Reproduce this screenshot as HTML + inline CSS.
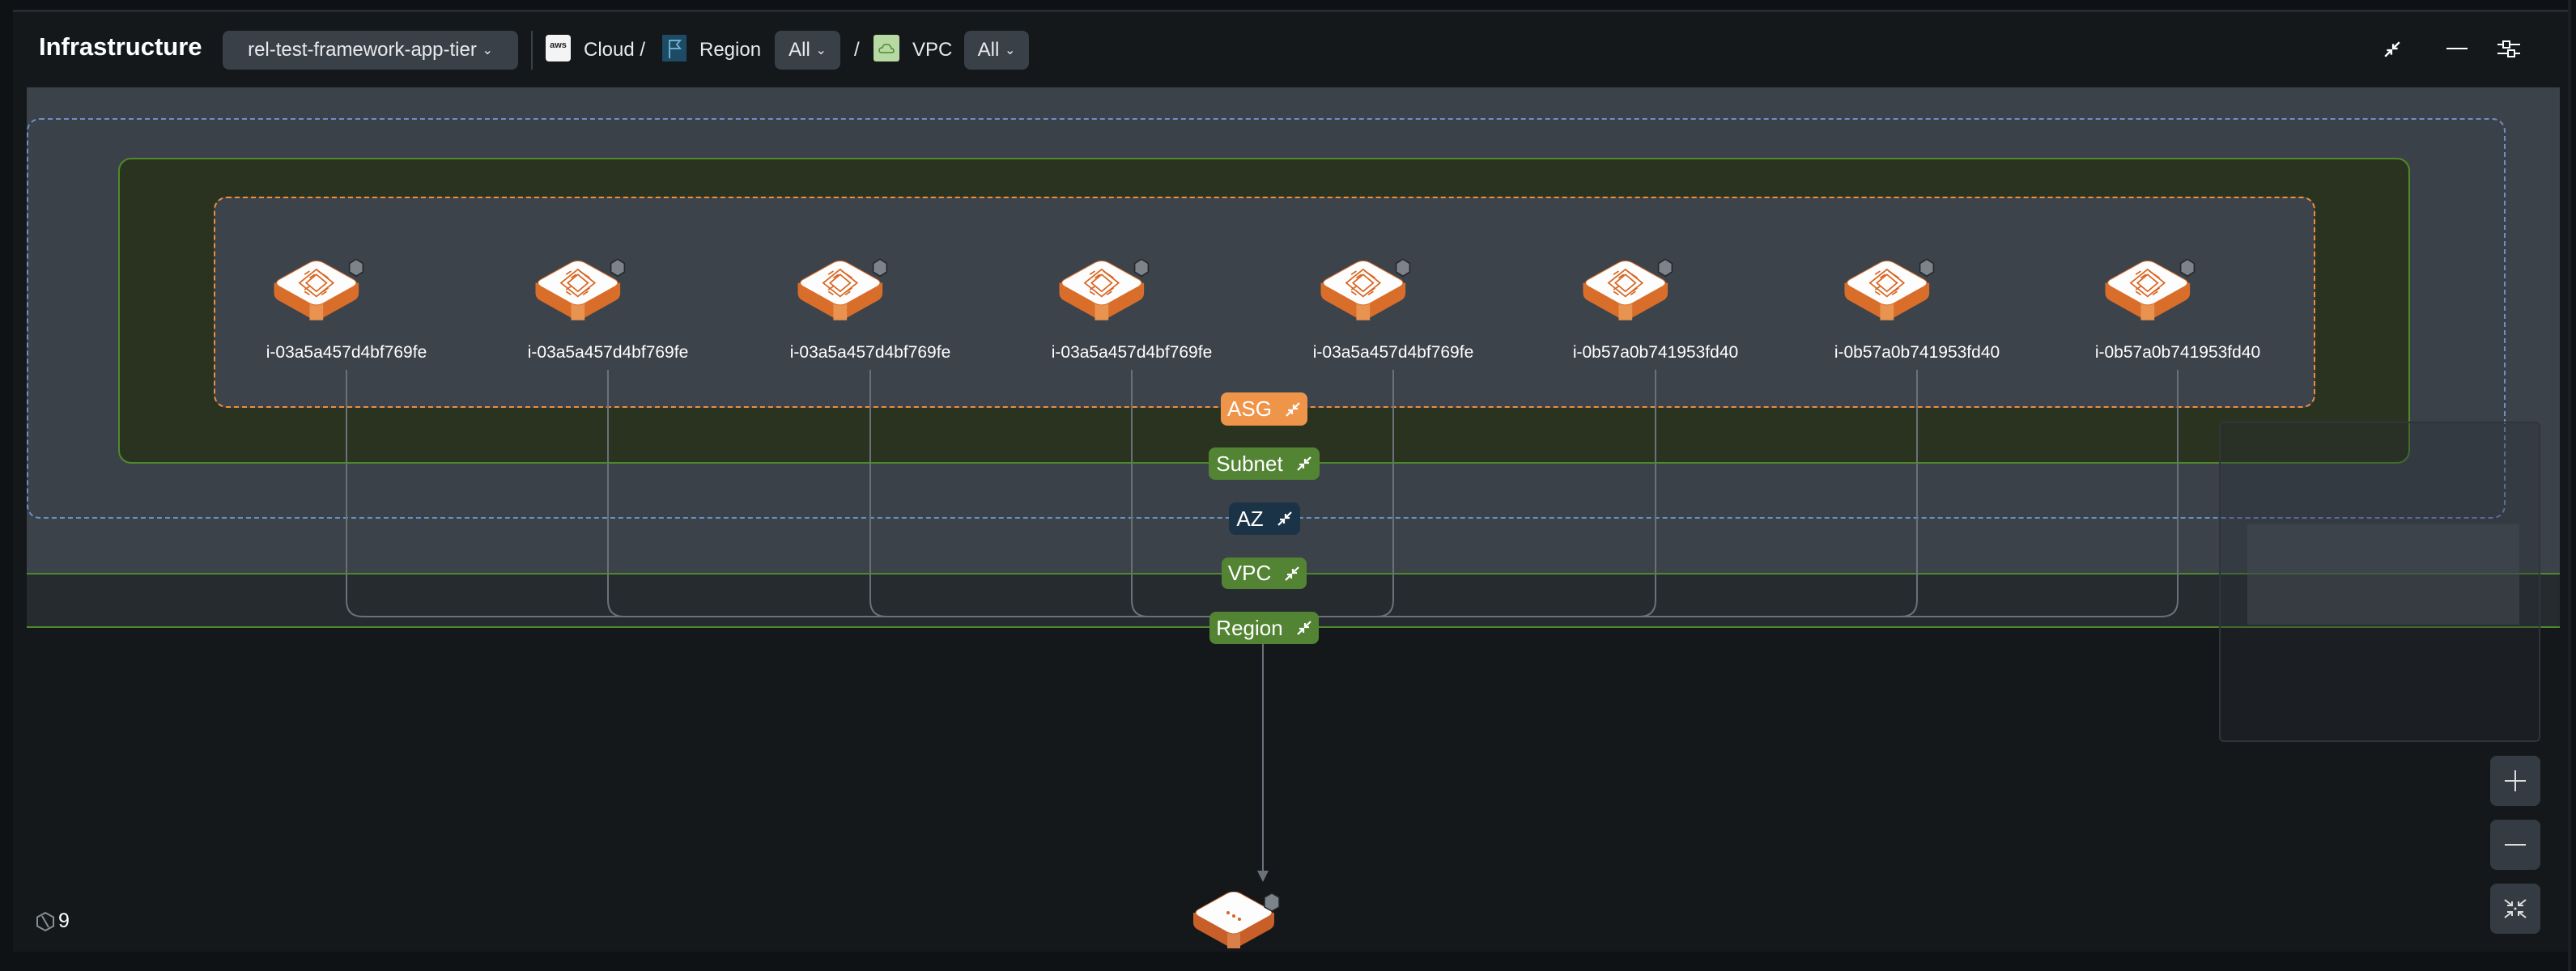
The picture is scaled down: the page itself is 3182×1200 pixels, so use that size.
<!DOCTYPE html>
<html><head><meta charset="utf-8"><style>
*{margin:0;padding:0;box-sizing:border-box}
body{width:3182px;height:1200px;background:#0f1214;position:relative;overflow:hidden;font-family:"Liberation Sans",sans-serif;color:#fff}
.abs{position:absolute}
.panel{left:16px;top:12px;width:3160px;height:1164px;background:#14181b;border-top:3px solid #252b30}
.dd{background:#3a4048;border-radius:8px;font-size:24px;color:#e8eaed;display:flex;align-items:center;justify-content:center}
.badge{border-radius:8px;font-size:26px;display:flex;align-items:center;justify-content:center;gap:16px;color:#fff}
.lbl{font-size:21px;color:#fff;width:260px;text-align:center}
.btn{background:#353b43;border-radius:8px}
</style></head><body>
<div class="abs panel"></div>
<div class="abs" style="left:3172px;top:0;width:4px;height:1200px;background:#1c2024"></div>
<svg width="0" height="0" style="position:absolute"><defs>
<g id="col" stroke="#fff" stroke-width="2.2" fill="none"><path d="M2 18L9 11M4 11H9V16M18 2L11 9M16 9H11V4"/></g>
</defs></svg>
<!-- header -->
<div class="abs" style="left:48px;top:34px;font-size:31px;font-weight:bold;line-height:48px">Infrastructure</div>
<div class="abs dd" style="left:275px;top:38px;width:365px;height:48px">rel-test-framework-app-tier&nbsp;<span style="font-size:16px">⌄</span></div>
<div class="abs" style="left:656px;top:38px;width:2px;height:48px;background:#3a4048"></div>
<div class="abs" style="left:674px;top:43px;width:31px;height:33px;background:#f4f4f4;border-radius:4px;color:#222;font-size:11px;font-weight:bold;text-align:center;line-height:26px">aws</div>
<div class="abs" style="left:721px;top:48px;font-size:24px;color:#e8eaed">Cloud /</div>
<div class="abs" style="left:818px;top:43px;width:30px;height:33px;background:#1d4b63"><svg width="30" height="33"><path d="M9 6V29M9 7H22L18 12L22 17H9" stroke="#6aaed0" stroke-width="2" fill="none"/></svg></div>
<div class="abs" style="left:864px;top:48px;font-size:24px;color:#e8eaed">Region</div>
<div class="abs dd" style="left:957px;top:38px;width:81px;height:48px">All&nbsp;<span style="font-size:16px">⌄</span></div>
<div class="abs" style="left:1055px;top:48px;font-size:24px;color:#e8eaed">/</div>
<div class="abs" style="left:1079px;top:43px;width:32px;height:33px;background:#b7d9a2;border-radius:3px"><svg width="32" height="33"><path d="M10 22Q7 22 7 19Q7 16 11 16Q12 11 17 12Q21 12 22 17Q25 17 25 20Q25 22 22 22Z" stroke="#4d8a35" stroke-width="1.5" fill="none"/></svg></div>
<div class="abs" style="left:1127px;top:48px;font-size:24px;color:#e8eaed">VPC</div>
<div class="abs dd" style="left:1191px;top:38px;width:80px;height:48px">All&nbsp;<span style="font-size:16px">⌄</span></div>
<svg class="abs" style="left:2930px;top:40px" width="240" height="40">
<g transform="translate(14,10) scale(1.1)"><use href="#col"/></g>
<path d="M92 20H118" stroke="#fff" stroke-width="2"/>
<path d="M155 15H183M155 26H183" stroke="#fff" stroke-width="2"/><rect x="162" y="11" width="8" height="8" fill="#14181b" stroke="#fff" stroke-width="2"/><rect x="168" y="22" width="8" height="8" fill="#14181b" stroke="#fff" stroke-width="2"/>
</svg>
<!-- canvas regions -->
<div class="abs" style="left:33px;top:108px;width:3129px;height:600px;background:#3c424a"></div>
<div class="abs" style="left:33px;top:708px;width:3129px;height:68px;background:#262b30;border-top:2px solid #4d8a2d;border-bottom:2px solid #4d8a2d"></div>
<div class="abs" style="left:33px;top:146px;width:3062px;height:495px;border:2px dashed #6d8fc7;border-radius:16px;background:#3b4149"></div>
<div class="abs" style="left:146px;top:195px;width:2831px;height:378px;border:2px solid #4f8a2a;border-radius:16px;background:#2a3320"></div>
<div class="abs" style="left:264px;top:243px;width:2596px;height:261px;border:2px dashed #ef8d3d;border-radius:16px;background:#3d434b"></div>
<!-- connectors -->
<svg class="abs" style="left:0;top:0" width="3182" height="1200">
<g stroke="#6b7178" stroke-width="2" fill="none">
<path d="M428 457V742Q428 762 448 762H1558"/>
<path d="M751 457V742Q751 762 771 762"/>
<path d="M1075 457V742Q1075 762 1095 762"/>
<path d="M1398 457V742Q1398 762 1418 762"/>
<path d="M1721 457V742Q1721 762 1701 762"/>
<path d="M2045 457V742Q2045 762 2025 762"/>
<path d="M2368 457V742Q2368 762 2348 762"/>
<path d="M2690 457V742Q2690 762 2670 762H1558"/>
<path d="M1560 762V1078"/>
</g>
<path d="M1553 1076L1567 1076L1560 1090Z" fill="#6b7178"/>
</svg>
<!-- instances -->
<svg width="0" height="0" style="position:absolute"><defs>
<g id="inst">
<path d="M2 36V48Q2 54 8 57L44 77Q52 81 60 77L96 57Q102 54 102 48V36Z" fill="#d86e2a"/>
<rect x="44" y="55" width="16" height="25" fill="#e8934f"/>
<path d="M8 32Q2 36 8 40L44 60Q52 64 60 60L96 40Q102 36 96 32L60 12Q52 8 44 12Z" fill="#fdfdfd" stroke="#d86e2a" stroke-width="1"/>
<g stroke="#d8641e" stroke-width="1.6" fill="none"><path d="M52 26L64 36L52 46L40 36Z"/><path d="M52 20L72 36L52 52L32 36Z"/><path d="M38 26L44 22M44 30L50 26M60 26L66 30M54 22L60 26M38 46L44 50M60 46L66 42M44 40L38 44M58 50L64 46"/></g>
<path d="M99 8L107 13V23L99 28L91 23V13Z" fill="#7d838b" stroke="#22272b" stroke-width="1.5"/>
</g></defs></svg>
<div id="insts"></div>
<script>
var xs=[428,751,1075,1398,1721,2045,2368,2690],ids=["i-03a5a457d4bf769fe","i-03a5a457d4bf769fe","i-03a5a457d4bf769fe","i-03a5a457d4bf769fe","i-03a5a457d4bf769fe","i-0b57a0b741953fd40","i-0b57a0b741953fd40","i-0b57a0b741953fd40"],h="";
xs.forEach(function(x,i){h+='<svg class="abs" style="left:'+(x-92)+'px;top:312px" width="118" height="90" viewBox="0 0 112 86"><use href="#inst"/></svg><div class="abs lbl" style="left:'+(x-130)+'px;top:424px">'+ids[i]+'</div>';});
document.getElementById("insts").innerHTML=h;
</script>
<!-- badges -->
<div class="abs badge" style="left:1508px;top:485px;width:107px;height:41px;background:#ef9549">ASG <svg width="20" height="20"><use href="#col"/></svg></div>
<div class="abs badge" style="left:1493px;top:553px;width:137px;height:40px;background:#528434">Subnet <svg width="20" height="20"><use href="#col"/></svg></div>
<div class="abs badge" style="left:1518px;top:621px;width:88px;height:40px;background:#1b3347">AZ <svg width="20" height="20"><use href="#col"/></svg></div>
<div class="abs badge" style="left:1509px;top:689px;width:105px;height:39px;background:#528434">VPC <svg width="20" height="20"><use href="#col"/></svg></div>
<div class="abs badge" style="left:1494px;top:756px;width:135px;height:40px;background:#528434">Region <svg width="20" height="20"><use href="#col"/></svg></div>
<!-- bottom icon -->
<svg class="abs" style="left:1472px;top:1102px" width="112" height="74" viewBox="0 0 112 74">
<path d="M2 26V38Q2 44 8 47L44 67Q52 71 60 67L96 47Q102 44 102 38V26Z" fill="#c85f28"/>
<rect x="44" y="45" width="16" height="25" fill="#d9804a"/>
<path d="M8 22Q2 26 8 30L44 50Q52 54 60 50L96 30Q102 26 96 22L60 2Q52 -2 44 2Z" fill="#fdfdfd" stroke="#c85f28"/>
<circle cx="45" cy="26" r="2" fill="#d8641e"/><circle cx="52" cy="30" r="2" fill="#d8641e"/><circle cx="59" cy="34" r="2" fill="#d8641e"/>
<path d="M99 2L108 7V19L99 24L90 19V7Z" fill="#7d838b" stroke="#22272b" stroke-width="1.5"/>
</svg>
<!-- minimap -->
<div class="abs" style="left:2741px;top:521px;width:397px;height:396px;border:2px solid #2f353b;border-radius:6px;background:rgba(40,45,52,0.35)"></div>
<div class="abs" style="left:2776px;top:648px;width:336px;height:124px;background:rgba(70,76,84,0.5)"></div>
<div class="abs btn" style="left:3076px;top:934px;width:62px;height:62px"><svg width="62" height="62"><path d="M18 31H44M31 18V44" stroke="#ddd" stroke-width="2"/></svg></div>
<div class="abs btn" style="left:3076px;top:1013px;width:62px;height:62px"><svg width="62" height="62"><path d="M18 31H44" stroke="#ddd" stroke-width="2"/></svg></div>
<div class="abs btn" style="left:3076px;top:1092px;width:62px;height:62px"><svg width="62" height="62"><g stroke="#ddd" stroke-width="2" fill="none"><path d="M18 20L27 27M21 27H27V22M44 20L35 27M41 27H35V22M18 42L27 35M21 35H27V40M44 42L35 35M41 35H35V40"/></g><circle cx="31" cy="31" r="1.5" fill="#ddd"/></svg></div>
<!-- count -->
<svg class="abs" style="left:43px;top:1126px" width="26" height="26"><path d="M13 2L23 7.5V18.5L13 24L3 18.5V7.5Z M9 6L17 20" stroke="#888d93" stroke-width="2" fill="none"/></svg>
<div class="abs" style="left:72px;top:1124px;font-size:25px">9</div>
</body></html>
